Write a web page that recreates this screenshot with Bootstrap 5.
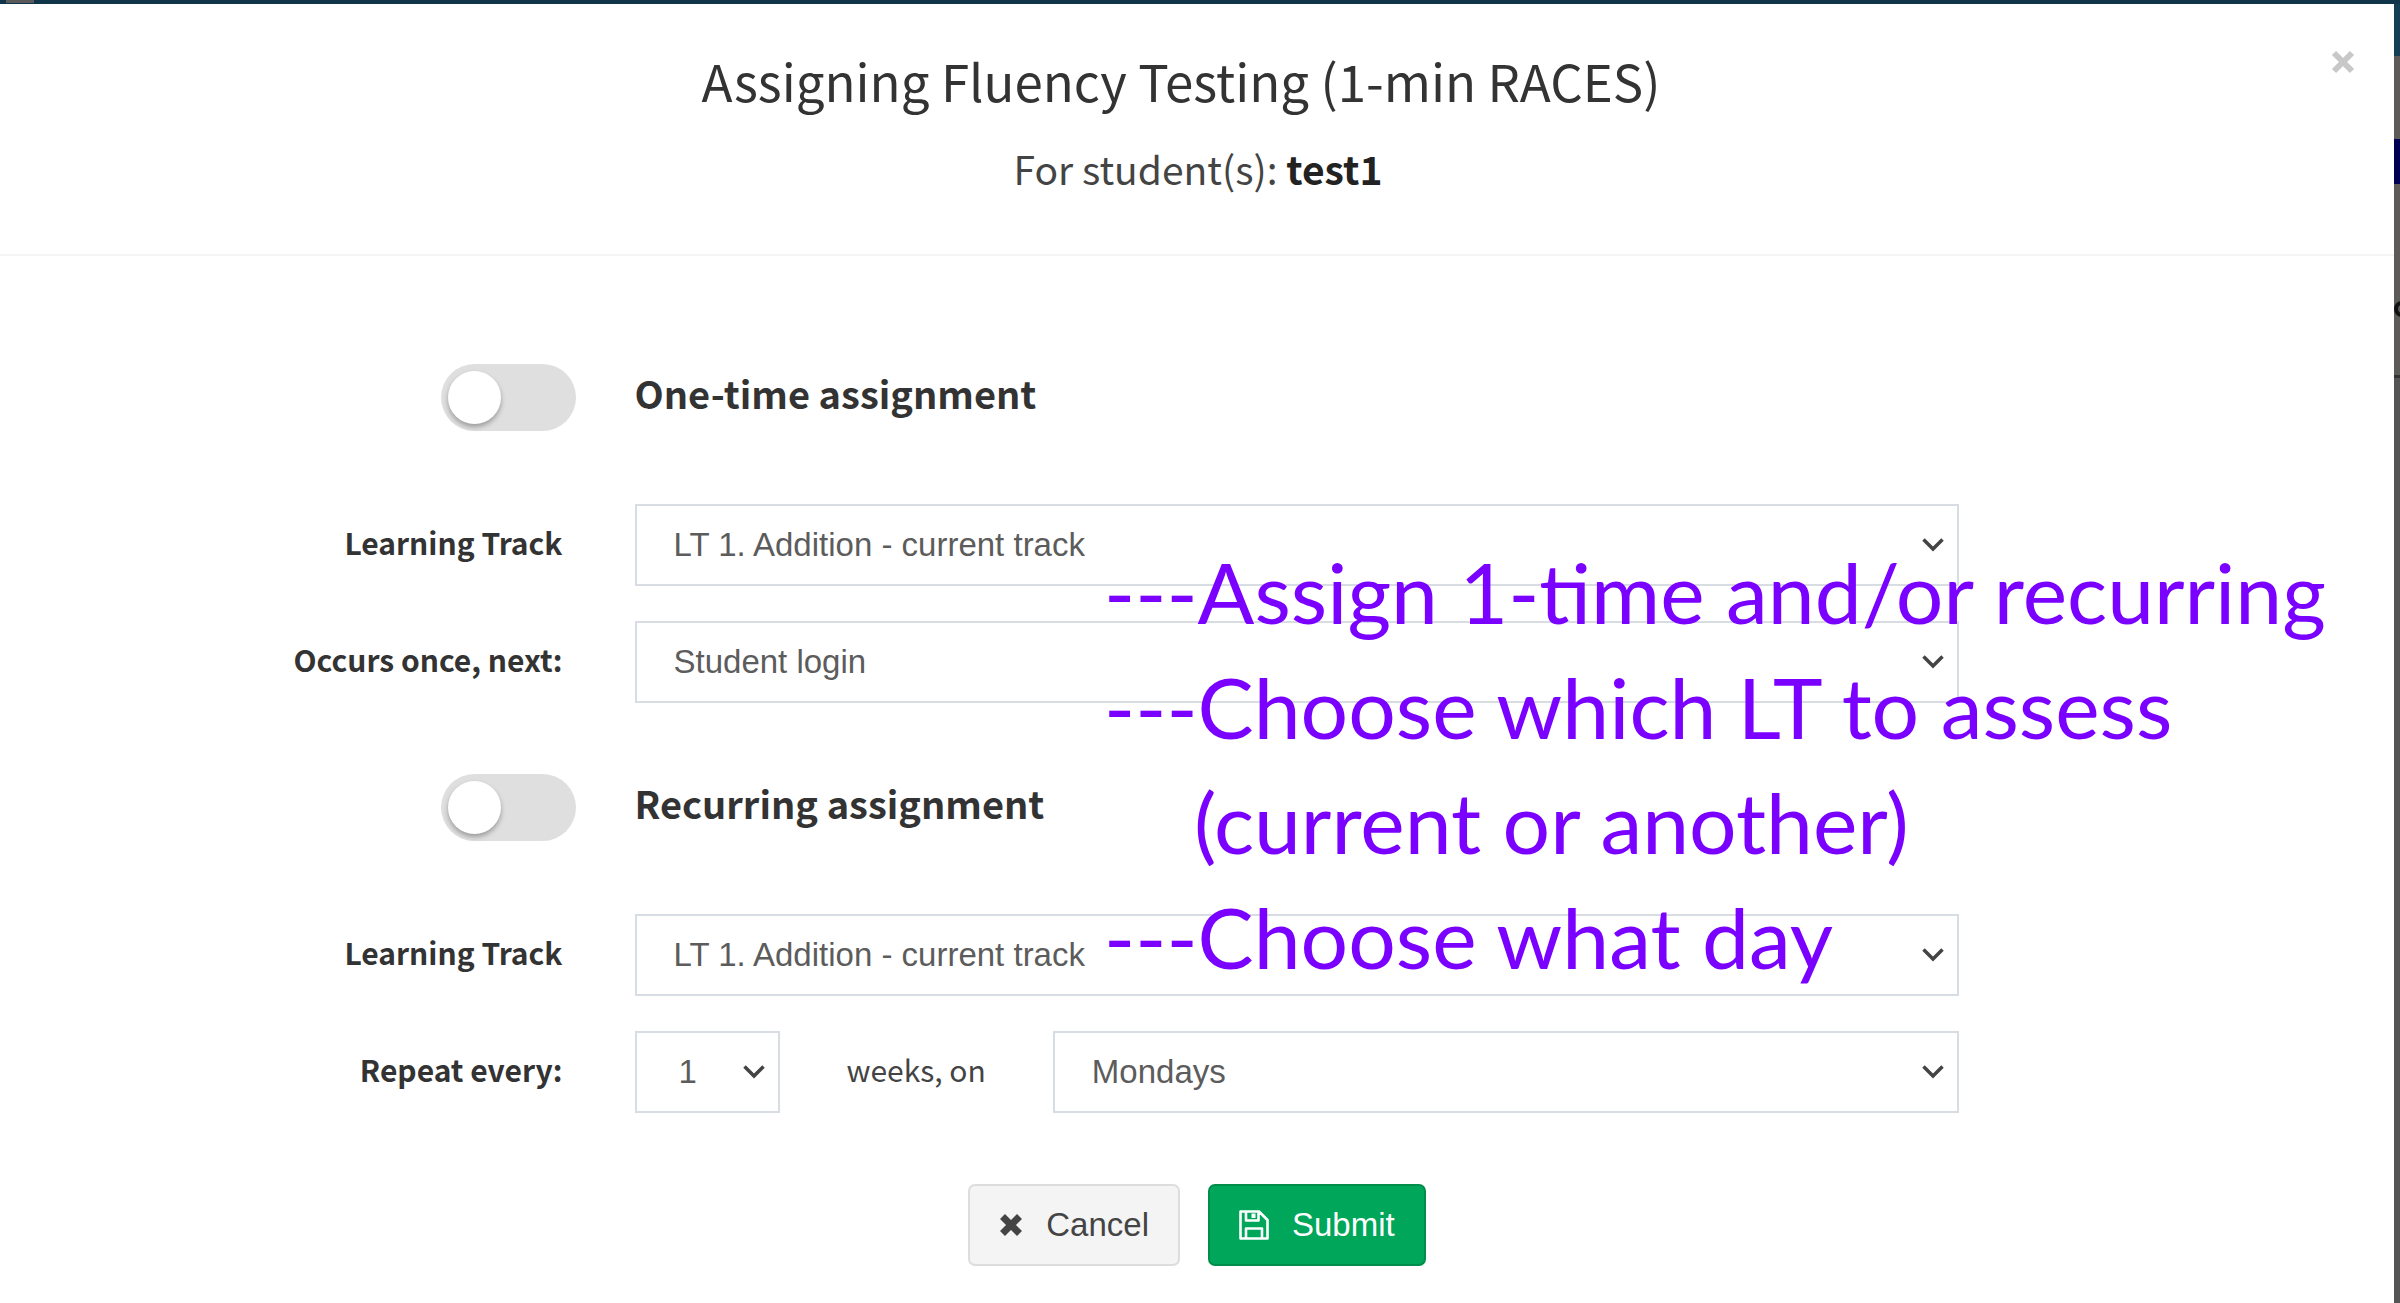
<!DOCTYPE html>
<html lang="en">
<head>
<meta charset="utf-8">
<meta name="viewport" content="width=device-width, initial-scale=1">
<title>Assigning Fluency Testing</title>
<link href="https://cdn.jsdelivr.net/npm/bootstrap@5.3.0/dist/css/bootstrap.min.css" rel="stylesheet">
<style>
  body { font-family: "Noto Sans CJK SC", "Noto Sans", sans-serif; color: #333; background: #555; font-size: 30px; }
  .page-topbar { height: 4px; background: #10344a; padding-left: 6px; }
  .page-topbar-tab { width: 28px; height: 3px; background: #5a5a5a; }
  .page-edge { width: 6px; background: #555; overflow: hidden; }
  .edge-nav { height: 52px; background: #143e52; }
  .edge-gap { height: 83px; background: #5c5b58; }
  .edge-banner { height: 45px; background: #000052; }
  .edge-panel { height: 194px; background: #5c5b58; border-bottom: 3px solid #333; padding-top: 117px; }
  .edge-dot { width: 16px; height: 16px; border: 4px solid #111; border-radius: 50%; }
  .dialog-head { padding: 46px 34px 56px 36px; border-bottom: 2px solid #f4f4f4; }
  .dialog-title { font-size: 51px; line-height: 60px; font-weight: 400; }
  .dialog-sub { font-size: 39px; line-height: 60px; margin-top: 28px; color: #444; }
  .dialog-sub strong { color: #222; }
  .dialog-close { width: 34px; height: 20px; }
  .dialog-form { padding-top: 108px; padding-bottom: 34px; }
  .dialog-form .row { --bs-gutter-x: 72px; }
  .row-switch { margin-bottom: 73px; }
  .row-field { margin-bottom: 35px; }
  .row-last { margin-bottom: 71px; }
  .toggle.form-check-input { width: 135px; height: 67px; margin: 0 -13px 0 0; border: 0; background-color: #dfdfdf; background-image: none; border-radius: 34px; position: relative; }
  .toggle.form-check-input::before { content: ""; display: block; width: 53px; height: 53px; margin: 7px; border-radius: 50%; background: #fff; box-shadow: 0 3px 5px rgba(0,0,0,.3); }
  .toggle.form-check-input:checked { background-color: #00a65a; }
  .toggle.form-check-input:checked::before { margin-left: 75px; }
  .section-title { font-size: 38px; line-height: 58px; font-weight: 700; }
  .field-label { line-height: 76px; font-weight: 700; }
  .field-text { line-height: 76px; color: #444; padding: 0 67px; }
  .pick.form-select { height: 82px; border: 2px solid #d8dce3; border-radius: 0; padding: 0 50px 0 37px; color: #5c5c5c;
    font: 33px/40px "Liberation Sans", Arial, sans-serif; background-position: right 13px center; background-size: 22px 14px;
    background-image: url("data:image/svg+xml,%3csvg xmlns='http://www.w3.org/2000/svg' viewBox='0 0 22 14'%3e%3cpath fill='none' stroke='%23444' stroke-width='3.500' d='M1.500 1.500L11 11L20.500 1.500'/%3e%3c/svg%3e"); }
  .pick-short.form-select { width: 145px; padding-left: 42px; }
  .action { height: 82px; padding: 0 29px; border-width: 2px; border-radius: 7px; gap: 23px; font: 33px/40px "Liberation Sans", Arial, sans-serif; }
  .action-cancel, .action-cancel:hover { background: #f4f4f4; border-color: #ddd; color: #444; }
  .action-submit, .action-submit:hover { background: #00a65a; border-color: #008d4c; color: #fff; }
  .hint { left: 1104px; top: 278px; font-family: Lato, "Noto Sans", sans-serif; font-size: 84px; line-height: 115px; color: #7a00ff; pointer-events: none; }
  .hint-indent { padding-left: 90px; }
</style>
</head>
<body class="d-flex flex-column min-vh-100">
<div class="page-topbar"><div class="page-topbar-tab"></div></div>
<div class="d-flex flex-grow-1">
  <main class="bg-white flex-grow-1">
    <header class="dialog-head">
      <div class="d-flex align-items-start">
        <h1 class="dialog-title flex-grow-1 text-center mb-0">Assigning Fluency Testing (1-min RACES)</h1>
        <button type="button" class="dialog-close btn p-0 border-0 d-flex" aria-label="Close">
          <svg width="24" height="24" viewBox="0 0 24 24" class="m-auto"><path d="M3 3L21 21M21 3L3 21" stroke="#c8c8c8" stroke-width="6" fill="none"/></svg>
        </button>
      </div>
      <p class="dialog-sub text-center mb-0">For student(s): <strong>test1</strong></p>
    </header>

    <form class="dialog-form position-relative">
      <div class="row mx-0 row-switch">
        <div class="col-3 d-flex justify-content-end"><input class="toggle form-check-input" type="checkbox" role="switch" id="oneTime"></div>
        <div class="col-7"><label class="section-title" for="oneTime">One-time assignment</label></div>
      </div>
      <div class="row mx-0 row-field">
        <label class="col-3 text-end field-label" for="track1">Learning Track</label>
        <div class="col-7"><select class="form-select pick" id="track1"><option>LT 1. Addition - current track</option></select></div>
      </div>
      <div class="row mx-0 row-last">
        <label class="col-3 text-end field-label" for="occurs">Occurs once, next:</label>
        <div class="col-7"><select class="form-select pick" id="occurs"><option>Student login</option></select></div>
      </div>

      <div class="row mx-0 row-switch">
        <div class="col-3 d-flex justify-content-end"><input class="toggle form-check-input" type="checkbox" role="switch" id="recurring"></div>
        <div class="col-7"><label class="section-title" for="recurring">Recurring assignment</label></div>
      </div>
      <div class="row mx-0 row-field">
        <label class="col-3 text-end field-label" for="track2">Learning Track</label>
        <div class="col-7"><select class="form-select pick" id="track2"><option>LT 1. Addition - current track</option></select></div>
      </div>
      <div class="row mx-0 row-last">
        <label class="col-3 text-end field-label" for="weeks">Repeat every:</label>
        <div class="col-7 d-flex">
          <select class="form-select pick pick-short flex-shrink-0" id="weeks"><option>1</option><option>2</option></select>
          <label class="field-text text-nowrap" for="day">weeks, on</label>
          <select class="form-select pick" id="day"><option>Mondays</option></select>
        </div>
      </div>

      <div class="d-flex justify-content-center" style="gap:28px">
        <button type="button" class="btn action action-cancel d-flex align-items-center">
          <svg width="24" height="24" viewBox="0 0 24 24"><path d="M3.500 3.500L20.500 20.500M20.500 3.500L3.500 20.500" stroke="#444" stroke-width="7" fill="none"/></svg>Cancel
        </button>
        <button type="submit" class="btn action action-submit d-flex align-items-center">
          <svg width="30" height="30" viewBox="0 0 30 30" fill="none" stroke="#fff" stroke-width="2.600" stroke-linejoin="round"><path d="M1.500 1.500H20L28.500 10V28.500H1.500ZM7 28.500V18.500H23V28.500M7 1.500V10.500H19.500V1.500"/><path d="M14.500 3.500V8" stroke-width="4"/></svg>Submit
        </button>
      </div>

      <div class="hint position-absolute text-nowrap">
        <div>---Assign 1-time and/or recurring</div>
        <div>---Choose which LT to assess</div>
        <div class="hint-indent">(current or another)</div>
        <div>---Choose what day</div>
      </div>
    </form>
  </main>
  <div class="page-edge flex-shrink-0">
    <div class="edge-nav"></div><div class="edge-gap"></div><div class="edge-banner"></div><div class="edge-panel"><div class="edge-dot"></div></div>
  </div>
</div>
<script src="https://cdn.jsdelivr.net/npm/bootstrap@5.3.0/dist/js/bootstrap.bundle.min.js"></script>
</body>
</html>
